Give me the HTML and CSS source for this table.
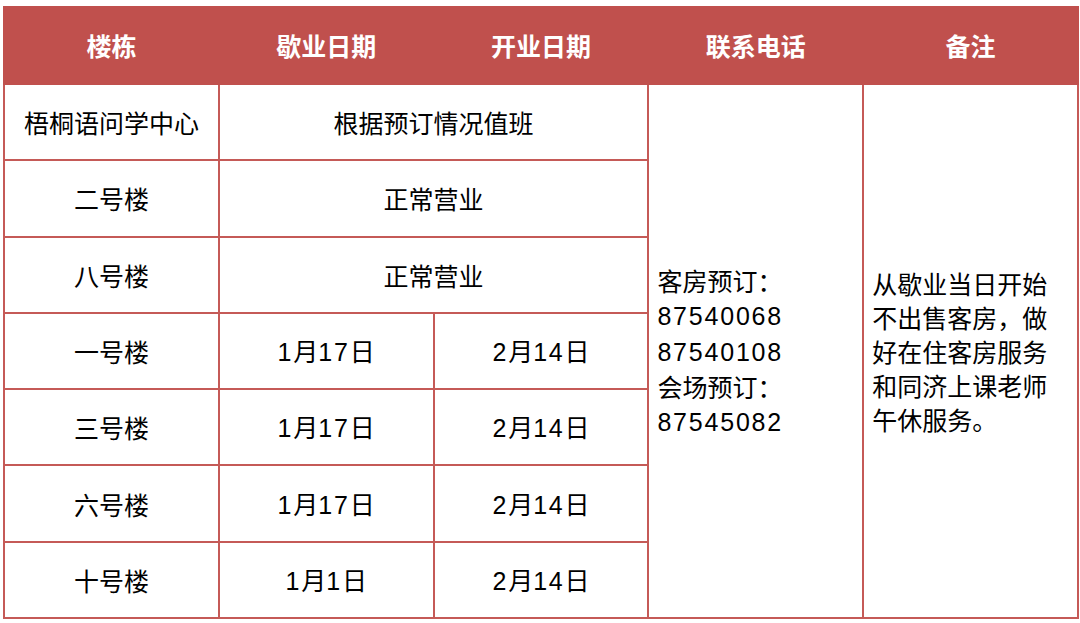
FILE: index.html
```html
<!DOCTYPE html>
<html lang="zh-CN">
<head>
<meta charset="utf-8">
<link rel="stylesheet" href="styles.css">
</head>
<body>
<div class="wrap">
<table class="sched">
  <colgroup><col><col><col><col><col></colgroup>
  <thead>
    <tr>
      <th>楼栋</th>
      <th>歇业日期</th>
      <th>开业日期</th>
      <th>联系电话</th>
      <th>备注</th>
    </tr>
  </thead>
  <tbody>
    <tr>
      <td>梧桐语问学中心</td>
      <td colspan="2">根据预订情况值班</td>
      <td rowspan="7" class="left">客房预订<span class="punc">：</span><br><span class="num">87540068</span><br><span class="num">87540108</span><br>会场预订<span class="punc">：</span><br><span class="num">87545082</span></td>
      <td rowspan="7" class="left">从歇业当日开始不出售客房，做好在住客房服务和同济上课老师午休服务。</td>
    </tr>
    <tr>
      <td>二号楼</td>
      <td colspan="2">正常营业</td>
    </tr>
    <tr>
      <td>八号楼</td>
      <td colspan="2">正常营业</td>
    </tr>
    <tr>
      <td>一号楼</td>
      <td><span class="num">1</span>月<span class="num">17</span>日</td>
      <td><span class="num">2</span>月<span class="num">14</span>日</td>
    </tr>
    <tr>
      <td>三号楼</td>
      <td><span class="num">1</span>月<span class="num">17</span>日</td>
      <td><span class="num">2</span>月<span class="num">14</span>日</td>
    </tr>
    <tr>
      <td>六号楼</td>
      <td><span class="num">1</span>月<span class="num">17</span>日</td>
      <td><span class="num">2</span>月<span class="num">14</span>日</td>
    </tr>
    <tr>
      <td>十号楼</td>
      <td><span class="num">1</span>月<span class="num">1</span>日</td>
      <td><span class="num">2</span>月<span class="num">14</span>日</td>
    </tr>
  </tbody>
</table>
</div>
</body>
</html>
```

FILE: styles.css
```css
html, body {
  margin: 0;
  padding: 0;
  background: #ffffff;
}
.wrap {
  padding: 6px 1px 0 3px;
}
.sched {
  width: 1076px;
  table-layout: fixed;
  border-collapse: collapse;
  font-family: "Noto Sans CJK SC", "Noto Sans", sans-serif;
  font-size: 25px;
  color: #000000;
}
.sched th {
  background: #c0504d;
  color: #ffffff;
  font-weight: bold;
  height: 74px;
  padding: 0 0 1px 0;
  border: 2px solid #c0504d;
  text-align: center;
  vertical-align: middle;
}
.sched td {
  height: 74.3px;
  padding: 0;
  border: 2px solid #c55a57;
  text-align: center;
  vertical-align: middle;
  line-height: 34px;
}
.sched td.left {
  text-align: left;
  padding: 0 8px;
}
.num {
  font-family: "Liberation Sans", Arial, sans-serif;
  letter-spacing: 1.8px;
}
.punc {
  font-family: "Noto Sans CJK JP", sans-serif;
}
```
